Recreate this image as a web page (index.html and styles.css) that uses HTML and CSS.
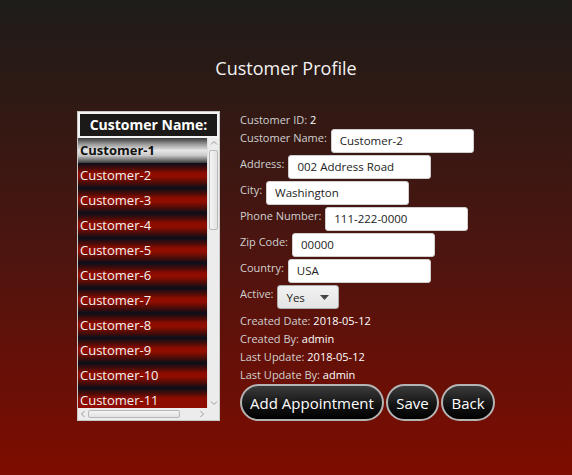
FILE: index.html
```html
<!DOCTYPE html>
<html>
<head>
<meta charset="utf-8">
<link rel="stylesheet" href="styles.css">
</head>
<body>
<main class="page">
  <h1 class="title">Customer Profile</h1>
  <div class="content">
    <section class="list">
      <div class="list-header">Customer Name:</div>
      <div class="list-main">
        <ul class="items">
          <li class="item selected">Customer-1</li>
          <li class="item">Customer-2</li>
          <li class="item">Customer-3</li>
          <li class="item">Customer-4</li>
          <li class="item">Customer-5</li>
          <li class="item">Customer-6</li>
          <li class="item">Customer-7</li>
          <li class="item">Customer-8</li>
          <li class="item">Customer-9</li>
          <li class="item">Customer-10</li>
          <li class="item last">Customer-11</li>
        </ul>
        <div class="vscroll">
          <svg class="arrow" width="12" height="10" viewBox="0 0 12 10"><path d="M3 6.5 L6 3.5 L9 6.5" fill="none" stroke="#9a9a9a" stroke-width="1"/></svg>
          <div class="vthumb"></div>
          <div class="vspace"></div>
          <svg class="arrow" width="12" height="10" viewBox="0 0 12 10"><path d="M3 3.5 L6 6.5 L9 3.5" fill="none" stroke="#9a9a9a" stroke-width="1"/></svg>
        </div>
      </div>
      <div class="hscroll-row">
        <div class="hscroll">
          <svg class="harrow" width="10" height="12" viewBox="0 0 10 12"><path d="M6.5 3 L3.5 6 L6.5 9" fill="none" stroke="#9a9a9a" stroke-width="1"/></svg>
          <div class="hthumb"></div>
          <div class="hspace"></div>
          <svg class="harrow" width="10" height="12" viewBox="0 0 10 12"><path d="M3.5 3 L6.5 6 L3.5 9" fill="none" stroke="#9a9a9a" stroke-width="1"/></svg>
        </div>
        <div class="corner"></div>
      </div>
    </section>
    <section class="form">
      <div class="info first"><span class="lbl">Customer ID:</span> <span class="val">2</span></div>
      <div class="field"><span class="lbl">Customer Name:</span><div class="input">Customer-2</div></div>
      <div class="field"><span class="lbl">Address:</span><div class="input">002 Address Road</div></div>
      <div class="field"><span class="lbl">City:</span><div class="input">Washington</div></div>
      <div class="field"><span class="lbl">Phone Number:</span><div class="input">111-222-0000</div></div>
      <div class="field"><span class="lbl">Zip Code:</span><div class="input">00000</div></div>
      <div class="field"><span class="lbl">Country:</span><div class="input">USA</div></div>
      <div class="field"><span class="lbl">Active:</span><div class="combo"><span>Yes</span><svg width="9" height="5" viewBox="0 0 9 5"><path d="M0 0 H9 L4.5 5 Z" fill="#444"/></svg></div></div>
      <div class="info meta"><span class="lbl">Created Date:</span> <span class="val">2018-05-12</span></div>
      <div class="info meta"><span class="lbl">Created By:</span> <span class="val">admin</span></div>
      <div class="info meta"><span class="lbl">Last Update:</span> <span class="val">2018-05-12</span></div>
      <div class="info meta"><span class="lbl">Last Update By:</span> <span class="val">admin</span></div>
      <div class="buttons">
        <button class="btn wide">Add Appointment</button>
        <button class="btn save">Save</button>
        <button class="btn back">Back</button>
      </div>
    </section>
  </div>
</main>
</body>
</html>
```
FILE: styles.css
```css
* { box-sizing: border-box; }
html, body { margin: 0; padding: 0; }
body {
  width: 572px;
  height: 475px;
  overflow: hidden;
  background: linear-gradient(180deg, #1e1c1a 0%, #2a1a15 15%, #4a1510 50%, #7e0c00 100%);
  font-family: "Open Sans", "Noto Sans", sans-serif;
  color: #fff;
}
.page { padding-top: 55px; }
.title {
  margin: 0;
  text-align: center;
  font-weight: 400;
  font-size: 18px;
  line-height: 26px;
  color: #f2f2f2;
}
.content {
  display: flex;
  gap: 20px;
  margin-top: 30px;
  padding-left: 77px;
}
.list {
  width: 143px;
  display: flex;
  flex-direction: column;
  background: #f0f0f0;
  border: 1px solid #c8c8c8;
}
.list-header {
  height: 26px;
  background: #1c1a19;
  border: 2px solid #f4f4f4;
  font-weight: 700;
  font-size: 14px;
  line-height: 22px;
  text-align: center;
  color: #fff;
}
.list-main { display: flex; height: 270px; }
.items {
  list-style: none;
  margin: 0;
  padding: 0;
  flex: 1;
  overflow: hidden;
}
.item {
  height: 25px;
  line-height: 24px;
  padding-left: 2px;
  font-size: 13px;
  color: #f2f2f2;
  background: linear-gradient(180deg, #0a0e1a 0%, #4a0c08 22%, #8c0c00 40%, #900d00 55%, #4a0c08 80%, #0a0e1a 100%);
}
.item.selected {
  color: #111;
  font-weight: 700;
  background: linear-gradient(180deg, #3a3a3a 0%, #9a9a9a 25%, #e6e6e6 50%, #c8c8c8 70%, #3a3a3a 100%);
}
.item.last {
  background: linear-gradient(180deg, #0a0e1a 0%, #4a0c08 22%, #8c0c00 40%, #900d00 100%);
}
.vscroll {
  width: 12px;
  display: flex;
  flex-direction: column;
  align-items: center;
  background: #ececec;
  border-left: 1px solid #e0e0e0;
}
.arrow { flex: none; }
.vthumb {
  width: 9px;
  height: 80px;
  margin-top: 2px;
  border: 1px solid #b8b8b8;
  border-radius: 2px;
  background: linear-gradient(90deg, #f4f4f4, #e2e2e2);
}
.vspace { flex: 1; }
.hscroll-row { display: flex; height: 12px; }
.hscroll {
  flex: 1;
  display: flex;
  align-items: center;
  background: #ececec;
}
.harrow { flex: none; }
.hthumb {
  width: 92px;
  height: 8px;
  border: 1px solid #b8b8b8;
  border-radius: 2px;
  background: linear-gradient(180deg, #f4f4f4, #e2e2e2);
}
.hspace { flex: 1; }
.corner { width: 12px; background: #ececec; }

.form {
  display: flex;
  flex-direction: column;
  font-size: 11px;
}
.lbl { color: #d0d0d0; }
.val { color: #fff; }
.info { height: 18px; line-height: 18px; }
.field {
  display: flex;
  align-items: flex-start;
  height: 26px;
  gap: 4px;
}
.field .lbl { line-height: 18px; }
.input {
  width: 143px;
  height: 24px;
  background: #fff;
  border: 1px solid #cfcfcf;
  border-radius: 3px;
  color: #222;
  font-size: 11.5px;
  line-height: 22px;
  padding-left: 8px;
}
.combo {
  width: 62px;
  height: 24px;
  display: flex;
  align-items: center;
  justify-content: space-between;
  padding: 0 9px 0 8px;
  border: 1px solid #adadad;
  border-radius: 3px;
  background: linear-gradient(180deg, #f2f2f2, #e4e4e4);
  color: #222;
  font-size: 11.5px;
}
.field + .meta { margin-top: 1px; }
.buttons {
  display: flex;
  gap: 2px;
  margin-top: 0;
}
.btn {
  height: 37px;
  padding: 0;
  border: 2px solid #b4b4b4;
  border-radius: 19px;
  background: linear-gradient(180deg, #3c3c3c 0%, #151515 55%, #000 100%);
  color: #fff;
  font-family: "Open Sans", "Noto Sans", sans-serif;
  font-size: 15px;
  white-space: nowrap;
}
.btn.wide { width: 144px; }
.btn.save { width: 53px; }
.btn.back { width: 54px; }
```
